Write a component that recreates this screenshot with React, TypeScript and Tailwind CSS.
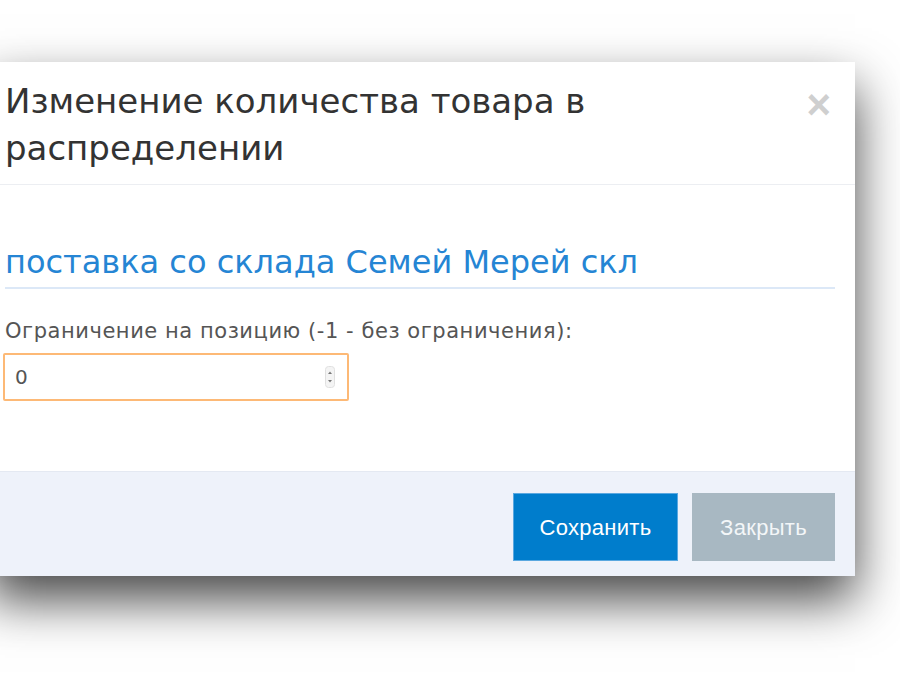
import React from 'react'

export default function App() {
  return (
    <div className="h-[700px] w-[900px] overflow-hidden bg-white pt-[62px]" style={{ fontFamily: '"DejaVu Sans", Verdana, sans-serif' }}>
      <div className="ml-[-12px] w-[867px] bg-white shadow-[0_24px_48px_rgba(0,0,0,0.72)]">
        {/* Header */}
        <div className="flex items-start justify-between border-b border-[#eceef2] pl-[17px] pr-[24px] pt-[16px] pb-[12px]">
          <h4 className="text-[34px] leading-[47px] font-normal text-[#333]">
            Изменение количества товара в<br />распределении
          </h4>
          <button className="mt-[6px] text-[42px] leading-none font-bold text-[#cfcfcf]" style={{ fontFamily: '"Liberation Sans", Arial, sans-serif' }}>×</button>
        </div>

        {/* Body */}
        <div className="px-[17px] pt-[57px] pb-[70px]">
          <div className="mr-[3px] border-b-2 border-[#dce8f7] pb-[5px] text-[32px] leading-[40px] text-[#2585d4]">
            поставка со склада Семей Мерей скл
          </div>
          <label className="mt-[30px] block text-[21px] leading-[24px] text-[#555] tracking-[0.55px]">
            Ограничение на позицию (-1 - без ограничения):
          </label>
          <div className="-ml-[2px] mt-[10px] flex h-[48px] w-[346px] items-center justify-between rounded-[2px] border-2 border-[#fdb976] pl-[10px] pr-[12px]">
            <span className="text-[20px] text-[#555]">0</span>
            <svg width="10" height="22" viewBox="0 0 10 22">
              <rect x="0.5" y="0.5" width="9" height="21" rx="3" fill="#f4f4f4" stroke="#e0e0e0" />
              <path d="M3 8 L5 5.5 L7 8 Z" fill="#777" />
              <path d="M3 14 L5 16.5 L7 14 Z" fill="#777" />
            </svg>
          </div>
        </div>

        {/* Footer */}
        <div className="flex justify-end gap-[14px] border-t border-[#e4e9f2] bg-[#eef2fa] pt-[21px] pb-[15px] pr-[20px]" style={{ fontFamily: '"Liberation Sans", Arial, sans-serif' }}>
          <button className="h-[68px] w-[165px] border border-[#5aa8e0] bg-[#007dcc] text-[22px] tracking-[0.3px] text-white">Сохранить</button>
          <button className="h-[68px] w-[143px] bg-[#a8b8c2] text-[22px] tracking-[0.3px] text-[#f3f6f8]">Закрыть</button>
        </div>
      </div>
    </div>
  )
}
